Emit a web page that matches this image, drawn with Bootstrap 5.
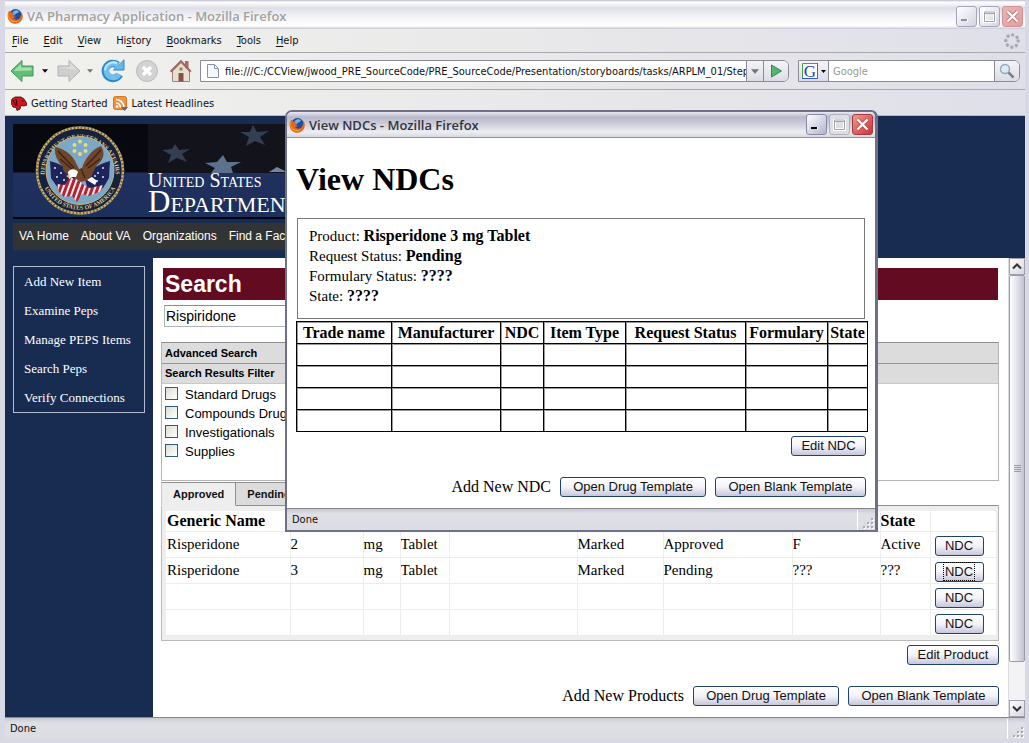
<!DOCTYPE html>
<html lang="en">
<head>
<meta charset="utf-8">
<meta name="viewport" content="width=device-width, initial-scale=1">
<title>VA Pharmacy Application - Mozilla Firefox</title>
<link href="https://cdn.jsdelivr.net/npm/bootstrap@5.3.0/dist/css/bootstrap.min.css" rel="stylesheet">
<style>
:root{--navy:#182b51;--ui:"DejaVu Sans Condensed","Noto Sans",sans-serif;--serif:"Liberation Serif",serif;--arial:"Liberation Sans",sans-serif}
body{font:15px/20px var(--serif);color:#000;background:#d7d7e3}
.app-window{min-height:100vh;border:solid #d9d9e6;border-width:0 4px 4px 5px;border-radius:8px 8px 0 0;background:#fff}
.ui-text{font:11px/14px var(--ui);color:#111}
.title-bar{height:29px;padding:3px 0 0 2px;background:linear-gradient(#b9b9cc 0,#fff 2px,#f6f6fa 4px,#dedee8 8px,#f2f2f6 16px,#fff 26px,#c6c6d0 29px)}
.title-text{font:600 13px/16px "Open Sans",sans-serif;color:#a3a29f;margin:0}
.caps{gap:2px;padding-right:2px}
.cap-btn{width:21px;height:21px;padding:0;border:1px solid #a5a5ba;border-radius:3px;background:linear-gradient(135deg,#fff,#d4d4e2);display:flex}
.cap-btn svg{width:19px;height:19px}
.cap-dim{color:#8f909c}
.cap-close{background:linear-gradient(135deg,#eab5b5,#e79b9b);border-color:#cf9298}
.chrome-bar{background:linear-gradient(90deg,#f1f1ed,#e9e9ea 50%,#dfdfe9)}
.menu-row{height:24px;padding:1px 5px 0 7px;gap:15px;border-bottom:1px solid #a9a9ad}
.menu-row a{color:#111;text-decoration:none}
.menu-row u{text-underline-offset:2px}
.tool-row{height:37px;padding:0 5px;border-bottom:1px solid #a9a9ad}
.mark-row{height:26px;padding:2px 6px 0;gap:5px;border-bottom:1px solid #b9b9bd}
.mark-row a{color:#111;text-decoration:none}
.tool-btn{border:0;background:none;padding:0;display:flex}
.tool-btn svg{display:block}
.hist-btn{margin:0 8px 0 7px}
.hist-btn+.tool-btn+.hist-btn{margin:0 8px 0 6px}
.stop-btn{margin:0 11px}
.home-btn{margin-right:8px}
.addr{height:22px;border:1px solid #8b8b98;background:#fff;min-width:0;overflow:hidden}
.addr-main{margin-right:9px}
.addr input{border:0;padding:0;height:20px;background:none;min-width:0;outline:0}
.addr .seg{height:20px;width:25px;flex-shrink:0;background:linear-gradient(#f4f4f7,#dcdce6);border-left:1px solid #8b8b98;justify-content:center;align-items:center}
.addr .seg-slim{width:17px}
.addr .seg-first{width:30px;gap:3px;border-left:0;border-right:1px solid #8b8b98}
.find-in{width:165px;color:#777}
.find-in::placeholder{color:#9a9a92;opacity:1}
.site-head{background:var(--navy);padding:8px}
.banner{width:75%;height:95px;border-bottom:2px solid #03060f;background:linear-gradient(#08080f 0,#080913 48px,#20305f 49px,#1d2f5b 100%)}
.banner>svg{display:block}
.dept{font-family:var(--serif);font-variant:small-caps;color:#fff;white-space:nowrap}
.dept-a{font-size:20px;line-height:22px}
.dept-b{font-size:31px;line-height:22px}
.seal{margin-left:16px}
.site-nav{width:75%;margin-top:4px;height:27px;background:#323334;padding:0 6px;gap:12px;font:12px/27px var(--arial)}
.site-nav a,.side-menu a{color:#fff;text-decoration:none;white-space:nowrap}
.side{width:148px;background:var(--navy);padding:8px}
.side-menu{border:1px solid #b4bccf;width:132px;padding:0 10px;font:13px/29px var(--serif)}
.content{padding:10px 9px 8px 8px;min-width:0}
.search-head{font:bold 23px/32px var(--arial);color:#fff;background:#630b21;padding-left:2px;margin:0 1px 5px 2px}
.search-in{width:300px;height:22px;margin:0 0 15px 3px;border:1px solid #b0b4b8;border-top-color:#8c8c8c;padding:0 1px;font:14px/20px var(--arial)}
.filter-box{border:1px solid #b4b4b4;border-top-color:#8e8e8e;height:139px;margin-bottom:1px}
.filter-head{font:bold 11px/19px var(--arial);background:#dcdcdc;padding-left:3px;margin:0;border-bottom:1px solid #c8c8c8}
.filter-head:first-child{line-height:20px;border-bottom-color:#959595}
.checks{padding:1px 3px;font:13px/19px var(--arial)}
.checks .pick{display:flex;align-items:center;gap:7px;height:19px}
.checks .form-check-input[type=checkbox]{width:13px;height:13px;margin:0 0 3px;border:1px solid #315c7e;border-radius:0;background:linear-gradient(135deg,#dcdcd5,#fff)}
.tab-row{position:relative;z-index:1;margin-bottom:-1px}
.tab-row .nav-link{height:24px;border:1px solid #8f8f8f;border-left:0;border-radius:0;padding:0 11px;font:bold 11px/22px var(--arial);color:#111;background:#dcdcdc}
.tab-row .nav-link.active{background:#eee;border-left:1px solid #c8c8c8;border-bottom-color:#eee;color:#111}
.result-box{background:#eee;border:1px solid #bbb;border-top-color:#8f8f8f;padding:5px 4px 4px}
.grid-a{table-layout:fixed;width:100%;background:#fff}
.grid-a th,.grid-a td{padding:0;border:solid #ececec;border-width:0 1px 1px 0;height:26px;overflow:hidden;white-space:nowrap}
.grid-a th:first-child,.grid-a td:first-child{padding-left:1px}
.grid-a th{font-size:16px;height:20px;line-height:19px}
.grid-a td:last-child{padding:4px 0 0 4px;border-right:0;line-height:0}
.grid-a th:last-child{border-right:0}
.xp-btn{height:20px;padding:0 9px;border:1px solid #23416e;border-radius:3px;background:linear-gradient(#fff,#f3f3f8 50%,#c6c7dc);color:#111;font:13px/18px var(--arial);white-space:nowrap}
.xp-btn.focused span{outline:1px dotted #000;outline-offset:1px}
.w-ndc{width:49px}.w-edit{width:75px}.w-prod{width:92px;padding:0}.w-drug{width:146px}.w-blank{width:151px}
.new-row{font-size:16px;margin-top:21px;gap:9px}
.scroll-col{width:17px;background:#f3f3f6;border-left:1px solid #ddd}
.scroll-btn{height:17px;width:16px;padding:0;border:1px solid #a0a0b0;background:linear-gradient(135deg,#fff,#d5d5e0);display:flex}
.thumb{flex:387 0 0px;border:1px solid #9a9aaa;border-radius:2px;background:linear-gradient(90deg,#fff,#e9e9f0 40%,#c2c2d4);color:#99a}
.gap-track{flex:38 0 0px}
.status-row{height:22px;padding:0 0 0 5px;border-top:1px solid #85858c;background:linear-gradient(#c9cacf,#dfe0e5 5px,#dcdde2)}
.status-row .grip{border-left:1px solid #fff;height:20px;padding-left:5px;align-items:end}
.popup{position:absolute;left:285px;top:110px;width:593px;border:2px solid #6e7088;border-right-width:3px;border-radius:7px 7px 0 0;background:#fff;z-index:5}
.popup .title-bar{height:26px;padding:0 0 0 2px;border-radius:5px 5px 0 0;border-bottom:1px solid #8f8f9f;background:linear-gradient(#e9e9f2,#b9b9cd 5px,#c6c6d6 10px,#ededf3 20px,#d8d8e2)}
.popup .title-text{color:#33343c}
.popup .cap-btn{border-color:#8789a6;background:linear-gradient(135deg,#fff,#b2b3cb)}
.popup .cap-off{border-color:#b0b0c0;background:#dedee7}
.popup .cap-close{border-color:#a33a45;background:linear-gradient(135deg,#f19a8c,#d1303c)}
.popup-body{padding:23px 9px 11px}
.popup h2{font:bold 32px/36px var(--serif);margin:0 0 21px}
.popup b{font-size:16px}
.info-box{border:1px solid #777;margin:0 1px 2px 1px;padding:7px 11px 11px;height:101px}
.grid-b{table-layout:fixed;width:571px;border-collapse:collapse}
.grid-b th,.grid-b td{border:1px solid #000;height:22px;padding:0;text-align:center;white-space:nowrap;box-shadow:inset 1px 1px 0 #999}
.grid-b th{font-size:16px;line-height:20px}
</style>
</head>
<body>
<svg width="0" height="0" class="position-absolute" aria-hidden="true">
<defs>
<symbol id="fox" viewBox="0 0 16 16"><circle cx="8.5" cy="7.5" r="6.5" fill="#1f4c9c"/><path d="M6 3.5l3-1.5 3 1-1 2-2 .5-1.500 2L5 7z" fill="#68b7e6"/><path d="M2.500 2.500C0 5-.3 10.500 3 13.700c3.500 3.200 9.500 2.500 11.800-1.600 1.500-2.700 1.300-6-.6-8.300.3 2.200-.1 3.400-.7 4.400-.6 2.500-2.800 3.900-5.200 3.300-1.800-.4-2.300-1.500-2.300-1.500 1.500.3 2.600-.5 3.600-1.400C7 9 5.800 7.800 6 6.400L7.800 5.600C6.500 4.600 5.300 4.300 4 4.500z" fill="#e3691c"/><path d="M2.500 2.500C1 6 1.500 10 4.500 12c3 2 7 1.500 9-1.500-2 4-7 4.700-10 2C.8 10 .8 5 2.500 2.500z" fill="#f9b233"/></symbol>
<symbol id="min" viewBox="0 0 19 19"><path d="M4 12h7v3H4z" fill="#fff"/><path d="M4 12h6v2.200H4z" fill="currentColor"/></symbol>
<symbol id="max" viewBox="0 0 19 19"><path d="M4.500 5.500h10v9h-10z" fill="none" stroke="#fff" stroke-width="3"/><path d="M4.500 5h10v9.500h-10zM4.500 6.500h10" fill="none" stroke="#a2a3a9"/></symbol>
<symbol id="cls" viewBox="0 0 19 19"><path d="M4.500 4.500l10 10m0-10l-10 10" stroke="#8c3b3b" stroke-opacity=".5" stroke-width="4"/><path d="M4.500 4.500l10 10m0-10l-10 10" stroke="#fff" stroke-width="2.400"/></symbol>
<symbol id="dn" viewBox="0 0 7 4"><path d="M0 0h7L3.500 4z" fill="currentColor"/></symbol>
<symbol id="grip" viewBox="0 0 12 12"><g fill="#fff"><path d="M9 1h2v2H9zM5 5h2v2H5zM9 5h2v2H9zM1 9h2v2H1zM5 9h2v2H5zM9 9h2v2H9z"/></g><g fill="#a9a9b4"><path d="M8 0h2v2H8zM4 4h2v2H4zM8 4h2v2H8zM0 8h2v2H0zM4 8h2v2H4zM8 8h2v2H8z"/></g></symbol>
<pattern id="stripe" width="5" height="5" patternUnits="userSpaceOnUse" patternTransform="rotate(20)"><path d="M0 0h5v5H0z" fill="#eee"/><path d="M0 0h3v5H0z" fill="#b92033"/></pattern>
</defs>
</svg>

<div class="app-window d-flex flex-column position-relative">
  <header>
    <div class="title-bar d-flex align-items-center">
      <svg width="16" height="16" class="me-1"><use href="#fox"/></svg>
      <h1 class="title-text flex-grow-1">VA Pharmacy Application - Mozilla Firefox</h1>
      <div class="caps d-flex">
        <button class="cap-btn cap-dim" aria-label="Minimize"><svg><use href="#min"/></svg></button>
        <button class="cap-btn" aria-label="Maximize"><svg><use href="#max"/></svg></button>
        <button class="cap-btn cap-close" aria-label="Close"><svg><use href="#cls"/></svg></button>
      </div>
    </div>
    <nav class="chrome-bar menu-row ui-text d-flex align-items-center">
      <a href="#"><u>F</u>ile</a><a href="#"><u>E</u>dit</a><a href="#"><u>V</u>iew</a><a href="#">Hi<u>s</u>tory</a><a href="#"><u>B</u>ookmarks</a><a href="#"><u>T</u>ools</a><a href="#"><u>H</u>elp</a>
      <svg class="ms-auto" width="16" height="16" viewBox="-8 -8 16 16"><circle r="6.200" fill="none" stroke="#a8a8ae" stroke-width="3.400" stroke-linecap="round" stroke-dasharray=".01 4.860"/></svg>
    </nav>
    <div class="chrome-bar tool-row d-flex align-items-center">
      <button class="tool-btn" aria-label="Back"><svg width="25" height="24" viewBox="0 0 25 24"><path d="M1 12L12 1.500V7h11v10H12v5.500z" fill="#62bf78" stroke="#3f9857"/><path d="M3.500 12L11 5v3.500h10.500v3z" fill="#a3e0ae"/></svg></button>
      <button class="tool-btn hist-btn" aria-label="Back history"><svg width="6" height="4"><use href="#dn"/></svg></button>
      <button class="tool-btn" aria-label="Forward"><svg width="25" height="24" viewBox="0 0 25 24"><path d="M24 12L13 1.500V7H2v10h11v5.500z" fill="#cfcfcf" stroke="#b4b4b4"/><path d="M3 8h11V4l7 7z" fill="#dedede"/></svg></button>
      <button class="tool-btn hist-btn text-secondary" aria-label="Forward history"><svg width="6" height="4"><use href="#dn"/></svg></button>
      <button class="tool-btn" aria-label="Reload"><svg width="24" height="24" viewBox="0 0 24 24"><path d="M18.500 15.500A7.500 7.500 0 1 1 16.500 6" fill="none" stroke="#2f86c6" stroke-width="7.500"/><path d="M23 .8V11H12.500z" fill="#63b9ea" stroke="#2f86c6"/><path d="M18 15.500A7 7 0 1 1 16.500 6" fill="none" stroke="#6fc0ee" stroke-width="5.500"/><path d="M4 11.500A8.300 8.300 0 0 1 16 4.500" fill="none" stroke="#c3e6fa" stroke-width="2"/><path d="M13 10h9V2z" fill="#63b9ea"/></svg></button>
      <button class="tool-btn stop-btn" aria-label="Stop"><svg width="22" height="24" viewBox="0 0 22 24"><circle cx="11" cy="12" r="10.500" fill="#d3d3d3" stroke="#bababa"/><path d="M7 8l8 8m0-8l-8 8" stroke="#fff" stroke-width="3.200"/></svg></button>
      <button class="tool-btn home-btn" aria-label="Home"><svg width="23" height="24" viewBox="0 0 23 24"><path d="M3.500 11v11.500h17V11L12 3z" fill="#eadfce" stroke="#99877a"/><path d="M16 2h3.500v7H16z" fill="#a66b5f"/><path d="M12 .8L.8 12l1.800 1.500L12 4l9 9.500 1.600-1.500z" fill="#9c6a62"/><path d="M9.500 14h5v8.500h-5z" fill="#875047"/><path d="M10.500 8.500h3v3h-3z" fill="#8c7f7c"/></svg></button>
      <div class="addr addr-main d-flex align-items-center flex-grow-1 rounded-end">
        <svg width="24" height="18" viewBox="0 0 24 18" class="flex-shrink-0"><path d="M6.500 2.500h7l4 4v9h-11z" fill="#f4f8fc" stroke="#8a94a0"/><path d="M13.500 2.500v4h4" fill="none" stroke="#8a94a0"/></svg>
        <input class="ui-text flex-grow-1" type="text" aria-label="Address" value="file:///C:/CCView/jwood_PRE_SourceCode/PRE_SourceCode/Presentation/storyboards/tasks/ARPLM_01/Step_01.html">
        <button class="tool-btn seg seg-slim text-secondary" aria-label="Address history"><svg width="8" height="5"><use href="#dn"/></svg></button>
        <button class="tool-btn seg" aria-label="Go"><svg width="16" height="14" viewBox="0 0 16 14"><path d="M3.500 1l10 6-10 6z" fill="#53b573" stroke="#2f8a4c"/></svg></button>
      </div>
      <div class="addr d-flex align-items-center rounded-end flex-shrink-0">
        <button class="tool-btn seg seg-first" aria-label="Search engine"><svg width="16" height="16" viewBox="0 0 16 16"><path d="M.5.5h15v15H.5z" fill="#fff"/><path d="M.5 15.500V.5h15" fill="none" stroke="#3aa64c"/><path d="M15.500 0v16" stroke="#d33"/><path d="M0 15.500h15" stroke="#35c"/><text x="8" y="14" text-anchor="middle" font-family="Liberation Serif,serif" font-size="17" fill="#1c3fae">G</text></svg><svg width="5" height="3"><use href="#dn"/></svg></button>
        <input class="ui-text find-in px-1" type="text" aria-label="Search the web" placeholder="Google">
        <button class="tool-btn seg" aria-label="Search"><svg width="16" height="16" viewBox="0 0 16 16"><circle cx="6" cy="6" r="4.500" fill="#dcecf7" stroke="#8fa9bd" stroke-width="1.500"/><path d="M9.500 9.500l5 5" stroke="#7c8088" stroke-width="2.500"/></svg></button>
      </div>
    </div>
    <nav class="chrome-bar mark-row ui-text d-flex align-items-center">
      <a href="#" class="d-flex gap-1 align-items-center"><svg width="16" height="15" viewBox="0 0 16 15"><path d="M1 3l3-2 6 0 3 2 2 3 1 3-3 1-3-.5L9 13l-3 1.500-1-3L2 11 0 7z" fill="#cf1820" stroke="#3a0508" stroke-width=".8"/><path d="M2 4l3 6M5 3l1 7M11 5h1.500" stroke="#3a0508"/></svg>Getting Started</a>
      <a href="#" class="d-flex gap-1 align-items-center"><svg width="15" height="15" viewBox="0 0 15 15"><rect x=".5" y=".5" width="13" height="13" rx="2" fill="#ef9340" stroke="#cf7428"/><path d="M3 3.500a8 8 0 0 1 8 8M3 7a4.500 4.500 0 0 1 4.500 4.500" fill="none" stroke="#fff" stroke-width="1.700"/><circle cx="4" cy="10.500" r="1.300" fill="#fff"/><path d="M8 11h7l-3.500 4z" fill="#667"/></svg>Latest Headlines</a>
    </nav>
  </header>

  <section class="site-head">
    <div class="banner d-flex align-items-end position-relative overflow-hidden">
      <svg class="position-absolute top-0 start-0" width="280" height="49" viewBox="0 0 280 49"><path d="M135 0h145v49H135z" fill="#12131b"/><g fill="#343f54"><path d="M162 20l4 6 11-1-8 5 5 8-10-4-9 5 3-8-9-5 10-1z"/><path d="M240 1l4 7 12-1-9 6 5 8-10-4-9 5 3-9-9-5 10 0z"/><path d="M210 31l4 7 14 0-10 5 2 6h-22l4-5-10-5 12-1z" fill="#5c728c"/><path d="M256 48l8-5 10 5z" fill="#71859a"/></g></svg>
      <svg class="seal position-relative flex-shrink-0" width="119" height="93" viewBox="0 0 119 93">
        <circle cx="51" cy="46.500" r="43" fill="#17213e" stroke="#c9b577" stroke-width="2.500"/>
        <circle cx="51" cy="46.500" r="43" fill="none" stroke="#735f33" stroke-width="2.500" stroke-dasharray="1.500 2"/>
        <path id="arcT" d="M15.500 50a35.500 35.500 0 1 1 71 0" fill="none"/><path id="arcB" d="M11.500 52a40 40 0 0 0 79 0" fill="none"/>
        <g font-family="Liberation Serif,serif" font-size="6" font-weight="bold" fill="#d9c98c"><text><textPath href="#arcT" startOffset="50%" text-anchor="middle">DEPARTMENT OF VETERANS AFFAIRS</textPath></text><text><textPath href="#arcB" startOffset="50%" text-anchor="middle">UNITED STATES OF AMERICA</textPath></text></g>
        <circle cx="51" cy="46.500" r="34" fill="#7ca7c5" stroke="#c9b577"/>
        <g fill="#e3dc83"><circle cx="51" cy="17.500" r="2"/><circle cx="45.500" cy="21" r="2"/><circle cx="56.500" cy="21" r="2"/><circle cx="45.500" cy="27" r="2"/><circle cx="56.500" cy="27" r="2"/><circle cx="51" cy="30" r="2"/></g>
        <path d="M21 37c8 2 18 7 26 15l-5 17-13-5-7-10z" fill="#1c2459"/><path d="M81 37c-8 2-18 7-26 15l5 17 14-5 6-10z" fill="#1c2459"/>
        <g fill="#dfe4f2"><circle cx="26" cy="44" r="1"/><circle cx="32" cy="49" r="1"/><circle cx="28" cy="53" r="1"/><circle cx="35" cy="56" r="1"/><circle cx="74" cy="44" r="1"/><circle cx="69" cy="49" r="1"/><circle cx="74" cy="53" r="1"/><circle cx="66" cy="52" r="1"/><circle cx="68" cy="57" r="1"/></g>
        <path d="M28 60l8 1 5-8 8 3 6 5 6 3 13-3-2 6-12 5-7-2-5 8-5-6-8 1-5-5z" fill="url(#stripe)"/>
        <path d="M26 23c8 1 17 7 21 16l3 6 3-1c3-9 9-18 19-22 5 7 2 15-4 19-3 5-5 9-6 14l-10 3-9-6c-6-1-10-6-9-9-5-5-9-12-8-20z" fill="#70452a"/><path d="M29 27l16 17M31 35l12 10M72 26L57 42M71 35l-12 9M52 45l4 9" stroke="#3c2415" stroke-width="1.400"/>
        <path d="M39 48c3-4 8-3 10 0l-2 5-4 0-3 2z" fill="#fff"/><path d="M37 52l4-2-1 4z" fill="#e7b93c"/><path d="M58 56l5-3 5 4-2 4z" fill="#fff"/>
      </svg>
      <div class="dept position-relative"><div class="dept-a">United States</div><div class="dept-b pb-1">Department of Veterans Affairs</div></div>
    </div>
    <nav class="site-nav d-flex overflow-hidden"><a href="#">VA Home</a><a href="#">About VA</a><a href="#">Organizations</a><a href="#">Find a Facility</a></nav>
  </section>

  <div class="d-flex flex-grow-1">
    <aside class="side flex-shrink-0">
      <nav class="side-menu d-flex flex-column"><a href="#">Add New Item</a><a href="#">Examine Peps</a><a href="#">Manage PEPS Items</a><a href="#">Search Peps</a><a href="#">Verify Connections</a></nav>
    </aside>
    <main class="content flex-grow-1">
      <h2 class="search-head">Search</h2>
      <input class="search-in d-block" type="text" aria-label="Search term" value="Rispiridone">
      <div class="filter-box">
        <h3 class="filter-head">Advanced Search</h3>
        <h3 class="filter-head">Search Results Filter</h3>
        <div class="checks">
          <div class="pick"><input class="form-check-input" type="checkbox" id="c1"><label for="c1">Standard Drugs</label></div>
          <div class="pick"><input class="form-check-input" type="checkbox" id="c2"><label for="c2">Compounds Drugs</label></div>
          <div class="pick"><input class="form-check-input" type="checkbox" id="c3"><label for="c3">Investigationals</label></div>
          <div class="pick"><input class="form-check-input" type="checkbox" id="c4"><label for="c4">Supplies</label></div>
        </div>
      </div>
      <nav class="nav tab-row"><a class="nav-link active" href="#">Approved</a><a class="nav-link" href="#">Pending</a></nav>
      <div class="result-box">
        <table class="grid-a">
          <colgroup><col style="width:124px"><col style="width:73px"><col style="width:37px"><col style="width:49px"><col style="width:128px"><col style="width:86px"><col style="width:129px"><col style="width:88px"><col style="width:50px"><col style="width:66px"></colgroup>
          <thead><tr><th>Generic Name</th><th></th><th></th><th></th><th></th><th></th><th></th><th></th><th>State</th><th></th></tr></thead>
          <tbody>
            <tr><td>Risperidone</td><td>2</td><td>mg</td><td>Tablet</td><td></td><td>Marked</td><td>Approved</td><td>F</td><td>Active</td><td><button class="xp-btn w-ndc">NDC</button></td></tr>
            <tr><td>Risperidone</td><td>3</td><td>mg</td><td>Tablet</td><td></td><td>Marked</td><td>Pending</td><td>???</td><td>???</td><td><button class="xp-btn w-ndc focused"><span>NDC</span></button></td></tr>
            <tr><td></td><td></td><td></td><td></td><td></td><td></td><td></td><td></td><td></td><td><button class="xp-btn w-ndc">NDC</button></td></tr>
            <tr><td></td><td></td><td></td><td></td><td></td><td></td><td></td><td></td><td></td><td><button class="xp-btn w-ndc">NDC</button></td></tr>
          </tbody>
        </table>
      </div>
      <div class="d-flex justify-content-end mt-1"><button class="xp-btn w-prod">Edit Product</button></div>
      <div class="new-row d-flex justify-content-end"><span>Add New Products</span><button class="xp-btn w-drug">Open Drug Template</button><button class="xp-btn w-blank">Open Blank Template</button></div>
    </main>
    <div class="scroll-col d-flex flex-column flex-shrink-0">
      <button class="scroll-btn" aria-label="Scroll up"><svg width="14" height="15" viewBox="0 0 14 15"><path d="M3 9.500l4-4 4 4" fill="none" stroke="#333" stroke-width="2"/></svg></button>
      <div class="thumb d-flex align-items-center justify-content-center"><svg width="7" height="8"><path d="M0 .5h7M0 2.500h7M0 4.500h7M0 6.500h7" stroke="currentColor"/></svg></div>
      <div class="gap-track"></div>
      <button class="scroll-btn" aria-label="Scroll down"><svg width="14" height="15" viewBox="0 0 14 15"><path d="M3 5.500l4 4 4-4" fill="none" stroke="#333" stroke-width="2"/></svg></button>
    </div>
  </div>
  <footer class="status-row ui-text d-flex align-items-center justify-content-between"><span>Done</span><span class="grip d-flex"><svg width="12" height="12"><use href="#grip"/></svg></span></footer>
</div>

<section class="popup" role="dialog" aria-label="View NDCs">
  <div class="title-bar d-flex align-items-center">
    <svg width="16" height="16" class="me-1"><use href="#fox"/></svg>
    <div class="title-text flex-grow-1">View NDCs - Mozilla Firefox</div>
    <div class="caps d-flex">
      <button class="cap-btn" aria-label="Minimize"><svg><use href="#min"/></svg></button>
      <button class="cap-btn cap-off" aria-label="Maximize"><svg><use href="#max"/></svg></button>
      <button class="cap-btn cap-close" aria-label="Close"><svg><use href="#cls"/></svg></button>
    </div>
  </div>
  <div class="popup-body">
    <h2>View NDCs</h2>
    <div class="info-box">
      <div>Product: <b>Risperidone 3 mg Tablet</b></div>
      <div>Request Status: <b>Pending</b></div>
      <div>Formulary Status: <b>????</b></div>
      <div>State: <b>????</b></div>
    </div>
    <table class="grid-b">
      <colgroup><col style="width:95px"><col style="width:109px"><col style="width:43px"><col style="width:82px"><col style="width:120px"><col style="width:82px"><col style="width:40px"></colgroup>
      <thead><tr><th>Trade name</th><th>Manufacturer</th><th>NDC</th><th>Item Type</th><th>Request Status</th><th>Formulary</th><th>State</th></tr></thead>
      <tbody>
        <tr><td></td><td></td><td></td><td></td><td></td><td></td><td></td></tr>
        <tr><td></td><td></td><td></td><td></td><td></td><td></td><td></td></tr>
        <tr><td></td><td></td><td></td><td></td><td></td><td></td><td></td></tr>
        <tr><td></td><td></td><td></td><td></td><td></td><td></td><td></td></tr>
      </tbody>
    </table>
    <div class="d-flex justify-content-end mt-1"><button class="xp-btn w-edit">Edit NDC</button></div>
    <div class="new-row d-flex justify-content-end"><span>Add New NDC</span><button class="xp-btn w-drug">Open Drug Template</button><button class="xp-btn w-blank">Open Blank Template</button></div>
  </div>
  <div class="status-row ui-text d-flex align-items-center justify-content-between"><span>Done</span><span class="grip d-flex"><svg width="12" height="12"><use href="#grip"/></svg></span></div>
</section>
<script src="https://cdn.jsdelivr.net/npm/bootstrap@5.3.0/dist/js/bootstrap.bundle.min.js"></script>
</body>
</html>
